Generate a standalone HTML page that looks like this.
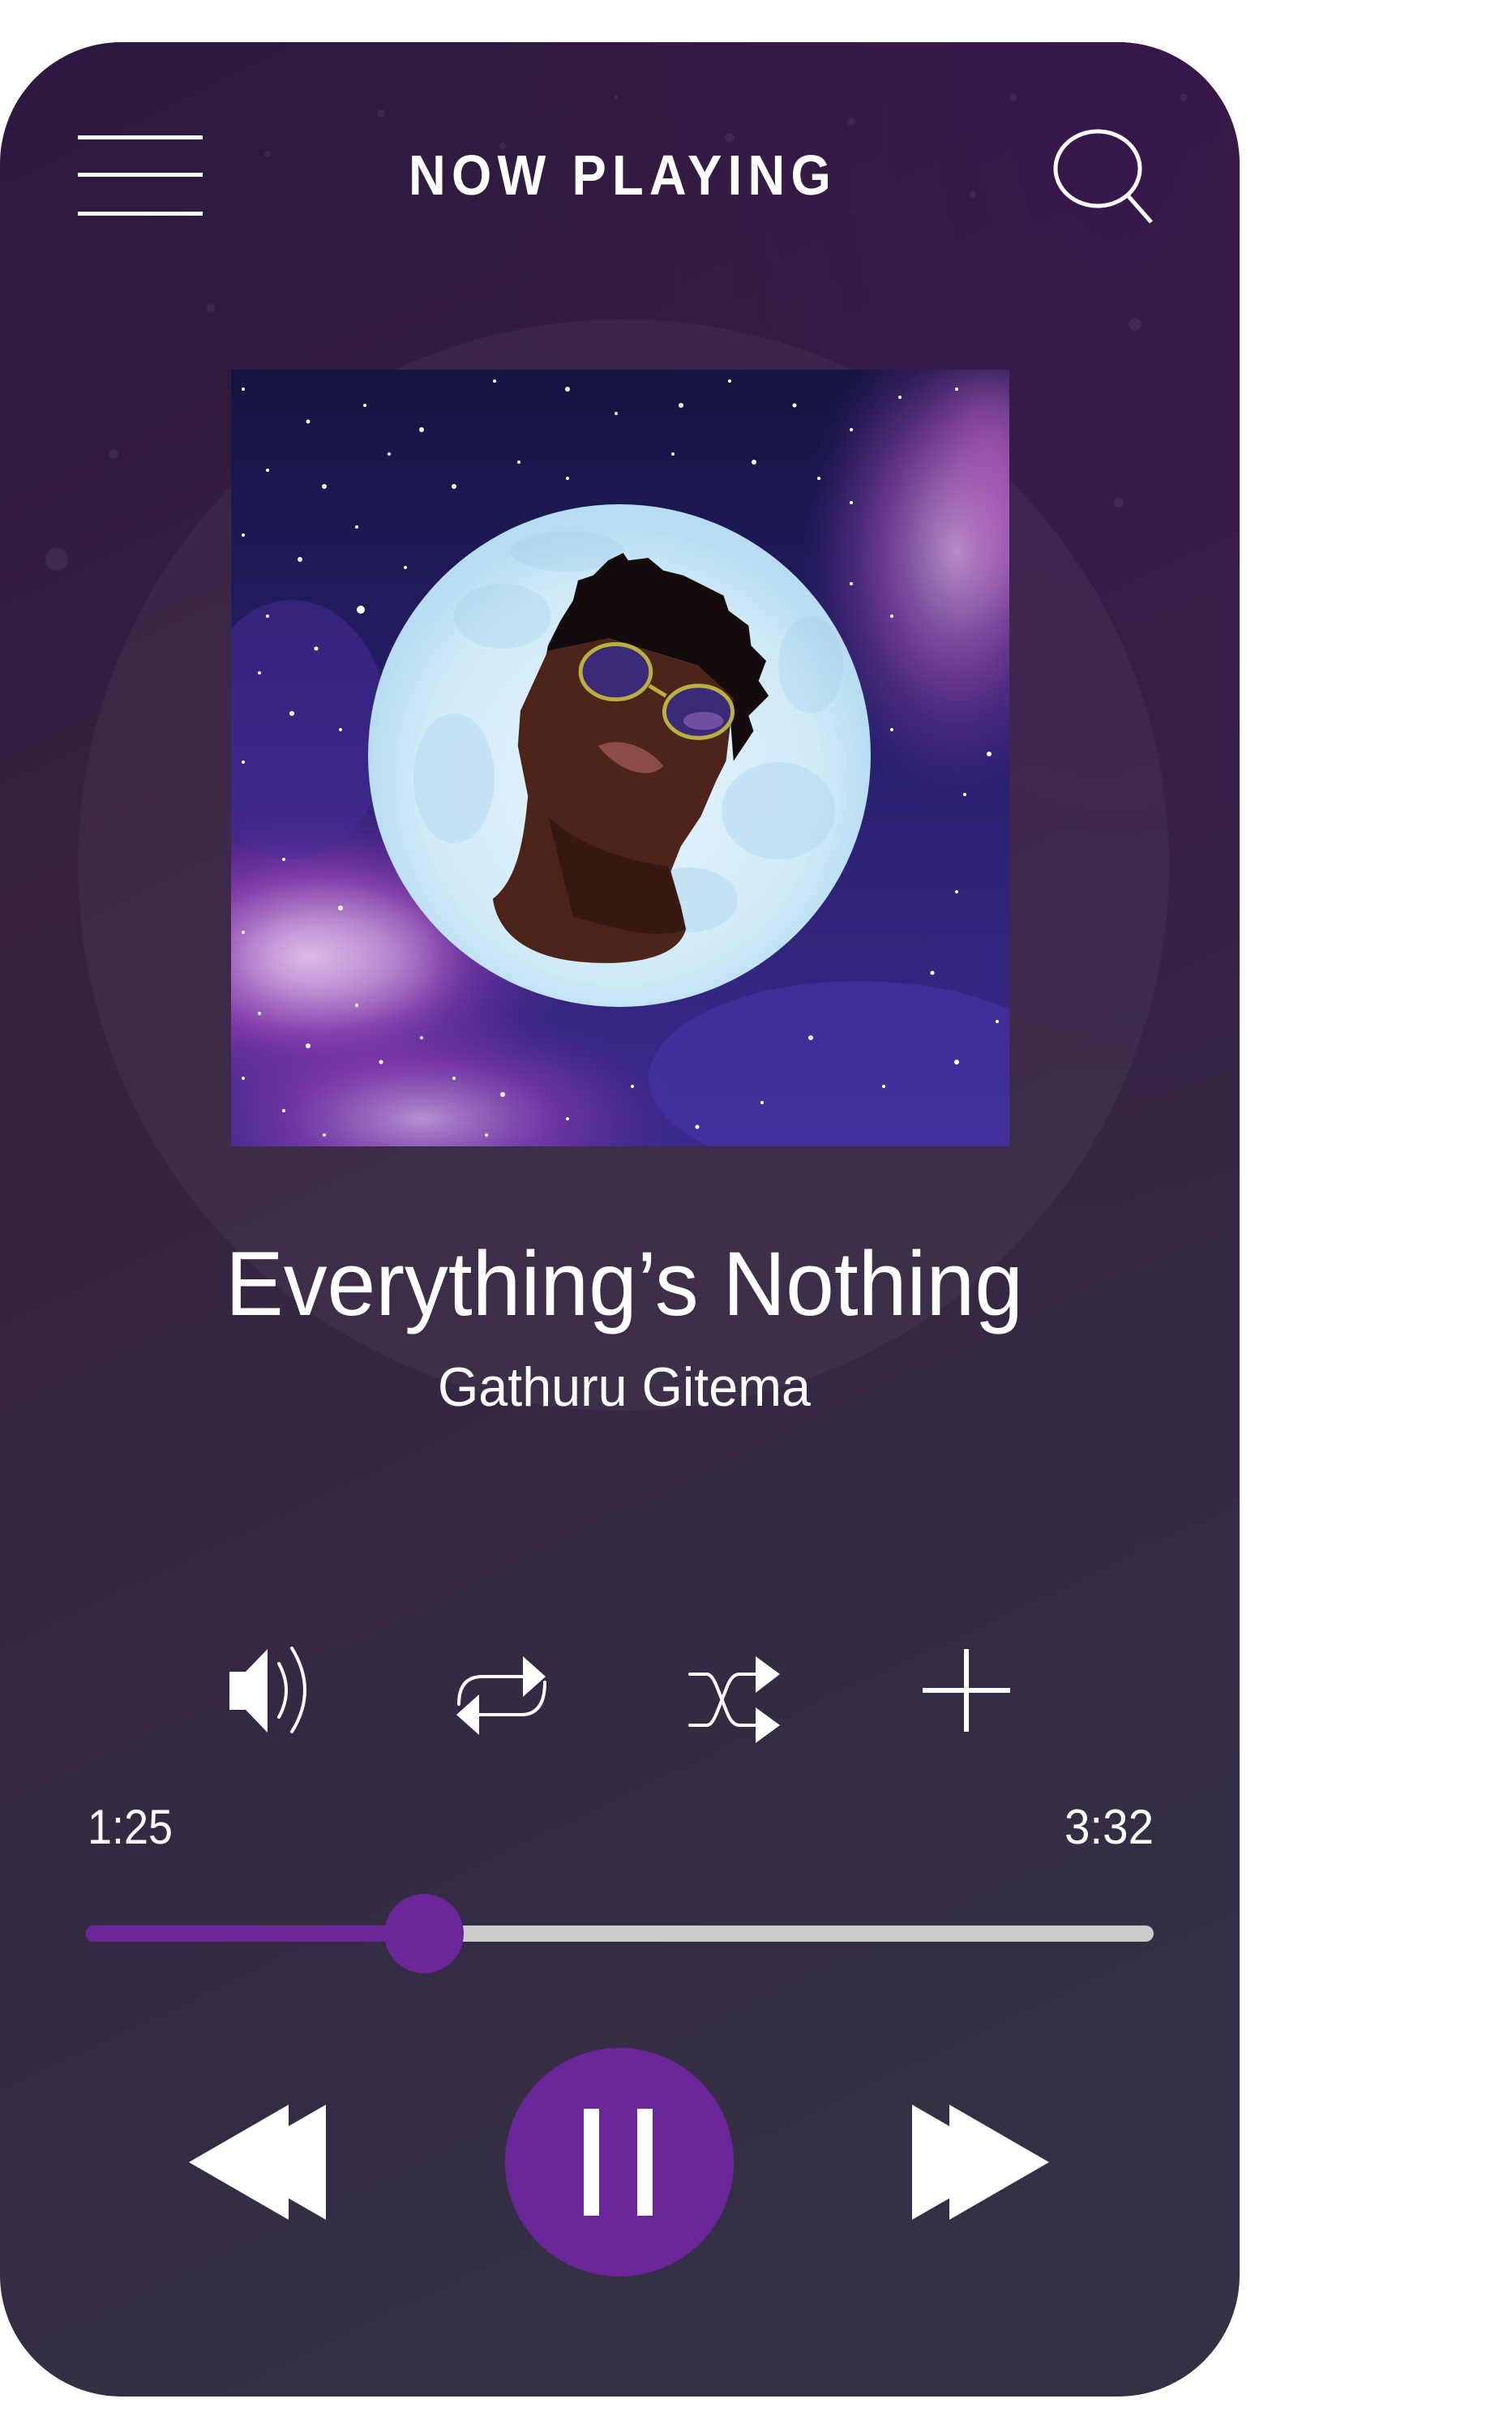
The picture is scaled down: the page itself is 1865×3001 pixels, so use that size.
<!DOCTYPE html>
<html><head><meta charset="utf-8">
<style>
html,body{margin:0;padding:0;background:#fff;}
body{width:1865px;height:3001px;overflow:hidden;}
svg{display:block;}
text{font-family:"Liberation Sans",sans-serif;fill:#fff;}
</style></head>
<body>
<svg width="1865" height="3001" viewBox="0 0 1865 3001" xmlns="http://www.w3.org/2000/svg">
<defs>
<linearGradient id="bg" x1="0" y1="0" x2="0.25" y2="1">
<stop offset="0" stop-color="#2c1740"/>
<stop offset="0.35" stop-color="#35213f"/>
<stop offset="1" stop-color="#342f45"/>
</linearGradient>
<radialGradient id="topglow" cx="0.9" cy="0.02" r="0.5">
<stop offset="0" stop-color="#3a1650" stop-opacity="0.8"/>
<stop offset="1" stop-color="#3a1650" stop-opacity="0"/>
</radialGradient>
<filter id="blur" x="-50%" y="-50%" width="200%" height="200%"><feGaussianBlur stdDeviation="35"/></filter>
<clipPath id="artclip"><rect x="285" y="456" width="960" height="958"/></clipPath>
<linearGradient id="sky" x1="0" y1="0" x2="0" y2="1">
<stop offset="0" stop-color="#14143f"/>
<stop offset="0.5" stop-color="#2a2070"/>
<stop offset="1" stop-color="#3a2a8a"/>
</linearGradient>
<radialGradient id="neb1" cx="0.5" cy="0.5" r="0.5">
<stop offset="0" stop-color="#e0b0e8" stop-opacity="0.95"/>
<stop offset="0.5" stop-color="#9a40b8" stop-opacity="0.7"/>
<stop offset="1" stop-color="#6a2aa0" stop-opacity="0"/>
</radialGradient>
<radialGradient id="neb2" cx="0.5" cy="0.5" r="0.5">
<stop offset="0" stop-color="#c9a8d8" stop-opacity="0.85"/>
<stop offset="0.5" stop-color="#9a4ab0" stop-opacity="0.6"/>
<stop offset="1" stop-color="#5a2a90" stop-opacity="0"/>
</radialGradient>
<radialGradient id="moon" cx="0.5" cy="0.55" r="0.5">
<stop offset="0" stop-color="#e6f5fd"/>
<stop offset="0.8" stop-color="#cfeaf8"/>
<stop offset="1" stop-color="#b8ddf2"/>
</radialGradient>
</defs>

<rect x="0" y="52" width="1529" height="2904" rx="150" ry="150" fill="url(#bg)"/>
<rect x="0" y="52" width="1529" height="2904" rx="150" ry="150" fill="url(#topglow)"/>
<g fill="#ffffff" opacity="0.06">
<circle cx="470" cy="140" r="5"/><circle cx="620" cy="180" r="4"/><circle cx="900" cy="170" r="6"/><circle cx="1050" cy="150" r="5"/><circle cx="1200" cy="240" r="4"/><circle cx="1400" cy="400" r="8"/><circle cx="70" cy="690" r="14"/><circle cx="140" cy="560" r="6"/><circle cx="260" cy="380" r="5"/><circle cx="1250" cy="120" r="4"/><circle cx="1380" cy="620" r="6"/><circle cx="1460" cy="120" r="5"/><circle cx="330" cy="190" r="4"/><circle cx="760" cy="120" r="3"/>
</g>

<circle cx="769" cy="1067" r="673" fill="#ffffff" opacity="0.04"/>

<g fill="#fff">
<rect x="96" y="167" width="154" height="5"/>
<rect x="96" y="213" width="154" height="5"/>
<rect x="96" y="261" width="154" height="5"/>
</g>
<text x="768" y="240" text-anchor="middle" font-size="70" font-weight="bold" textLength="528" lengthAdjust="spacingAndGlyphs" letter-spacing="8">NOW PLAYING</text>
<g fill="none" stroke="#fff" stroke-width="5">
<ellipse cx="1354" cy="208" rx="52" ry="46"/>
<line x1="1390" y1="240" x2="1420" y2="274"/>
</g>

<g clip-path="url(#artclip)">
<rect x="285" y="456" width="960" height="958" fill="url(#sky)"/>
<ellipse cx="380" cy="1180" rx="330" ry="200" fill="url(#neb1)"/>
<ellipse cx="520" cy="1380" rx="320" ry="140" fill="url(#neb1)" opacity="0.8"/>
<ellipse cx="1180" cy="680" rx="190" ry="300" fill="url(#neb2)"/>
<ellipse cx="1060" cy="1330" rx="260" ry="120" fill="#4a36a8" opacity="0.6"/>
<ellipse cx="360" cy="900" rx="120" ry="160" fill="#4a2c9a" opacity="0.5"/>
<ellipse cx="1230" cy="600" rx="60" ry="140" fill="#d070d0" opacity="0.5" filter="url(#blur)"/>
<ellipse cx="420" cy="1180" rx="120" ry="60" fill="#e8d0ee" opacity="0.45" filter="url(#blur)"/>
<g fill="#fff">
<circle cx="300" cy="480" r="2"/><circle cx="380" cy="520" r="2.5"/><circle cx="450" cy="500" r="2"/><circle cx="520" cy="530" r="3"/><circle cx="610" cy="470" r="2"/><circle cx="700" cy="480" r="3"/><circle cx="760" cy="510" r="2"/><circle cx="840" cy="500" r="3"/><circle cx="900" cy="470" r="2"/><circle cx="980" cy="500" r="2.5"/><circle cx="1050" cy="530" r="2"/><circle cx="1110" cy="490" r="2"/><circle cx="1180" cy="480" r="2"/>
<circle cx="330" cy="580" r="2"/><circle cx="400" cy="600" r="3"/><circle cx="480" cy="560" r="2"/><circle cx="560" cy="600" r="3"/><circle cx="640" cy="570" r="2"/><circle cx="700" cy="590" r="2"/><circle cx="830" cy="560" r="2"/><circle cx="930" cy="570" r="3"/><circle cx="1010" cy="590" r="2"/><circle cx="1050" cy="620" r="2"/>
<circle cx="300" cy="660" r="2"/><circle cx="370" cy="690" r="3"/><circle cx="440" cy="650" r="2"/><circle cx="500" cy="700" r="2"/><circle cx="445" cy="752" r="5"/><circle cx="330" cy="760" r="2"/><circle cx="390" cy="800" r="2.5"/><circle cx="320" cy="830" r="2"/><circle cx="360" cy="880" r="3"/><circle cx="300" cy="940" r="2"/><circle cx="420" cy="900" r="2"/>
<circle cx="1050" cy="720" r="2"/><circle cx="1100" cy="760" r="2"/><circle cx="1220" cy="930" r="3"/><circle cx="1190" cy="980" r="2"/><circle cx="1100" cy="900" r="2"/><circle cx="1180" cy="1100" r="2"/><circle cx="1150" cy="1200" r="2.5"/><circle cx="1000" cy="1280" r="3"/><circle cx="1090" cy="1340" r="2"/><circle cx="1180" cy="1310" r="3"/><circle cx="1230" cy="1260" r="2"/>
<circle cx="320" cy="1250" r="2"/><circle cx="380" cy="1290" r="3"/><circle cx="440" cy="1240" r="2"/><circle cx="470" cy="1310" r="2.5"/><circle cx="520" cy="1280" r="2"/><circle cx="560" cy="1330" r="2"/><circle cx="620" cy="1350" r="3"/><circle cx="700" cy="1380" r="2"/><circle cx="780" cy="1340" r="2"/><circle cx="860" cy="1390" r="2.5"/><circle cx="940" cy="1360" r="2"/><circle cx="350" cy="1370" r="2"/><circle cx="300" cy="1330" r="2"/><circle cx="400" cy="1400" r="2"/><circle cx="600" cy="1400" r="2"/><circle cx="350" cy="1060" r="2"/><circle cx="420" cy="1120" r="3"/><circle cx="300" cy="1150" r="2"/>
</g>
<circle cx="764" cy="932" r="310" fill="url(#moon)"/>
<g fill="#a9d2ec" opacity="0.4">
<ellipse cx="620" cy="760" rx="60" ry="40"/><ellipse cx="560" cy="960" rx="50" ry="80"/><ellipse cx="960" cy="1000" rx="70" ry="60"/><ellipse cx="1000" cy="820" rx="40" ry="60"/><ellipse cx="850" cy="1110" rx="60" ry="40"/><ellipse cx="700" cy="680" rx="70" ry="25"/>
</g>
<g transform="translate(280,450) scale(0.6186)">
<path d="M620 670 L640 560 L665 510 L690 470 L700 430 L730 420 L760 390 L790 375 L800 390 L840 385 L870 410 L910 420 L950 440 L990 460 L1000 490 L1040 520 L1045 560 L1075 590 L1060 630 L1080 660 L1040 700 L1050 730 L1010 790 L1000 660 L940 600 L760 545 L690 580 Z" fill="#140c0c"/>
<path d="M585 690 L640 570 L760 545 L940 600 L1010 665 L995 790 L975 830 L945 900 L905 960 L885 1010 L905 1080 L915 1125 C900 1185 800 1200 700 1190 C600 1180 540 1135 530 1065 C580 1025 592 945 600 860 L580 760 Z" fill="#4c2419"/>
<path d="M640 900 C700 960 800 990 880 1000 L905 1080 L915 1125 C860 1150 760 1120 690 1100 Z" fill="#331510" opacity="0.8"/>
<path d="M740 760 C780 740 840 760 870 800 C840 830 780 810 740 760 Z" fill="#8a4c44"/>
<ellipse cx="775" cy="612" rx="70" ry="55" fill="#3a2a78" stroke="#b9b040" stroke-width="8"/>
<ellipse cx="940" cy="692" rx="68" ry="52" fill="#3a2a78" stroke="#b9b040" stroke-width="8"/>
<ellipse cx="950" cy="710" rx="40" ry="18" fill="#8a60b0" opacity="0.7"/>
<line x1="842" y1="640" x2="875" y2="660" stroke="#b9b040" stroke-width="8"/>
</g>
</g>

<text x="770" y="1622" text-anchor="middle" font-size="112" textLength="984" lengthAdjust="spacingAndGlyphs">Everything’s Nothing</text>
<text x="770" y="1734" text-anchor="middle" font-size="68" textLength="460" lengthAdjust="spacingAndGlyphs" fill="#eee">Gathuru Gitema</text>

<g fill="#fff">
<path d="M283 2062 L303 2062 L330 2034 L330 2137 L303 2109 L283 2109 Z"/>
</g>
<g fill="none" stroke="#fff" stroke-width="4" stroke-linecap="round">
<path d="M344 2052 Q362 2085 344 2118"/>
<path d="M360 2033 Q392 2085 360 2136"/>
<path d="M566 2102 Q566 2068 595 2068 L652 2068"/>
<path d="M672 2075 Q672 2115 643 2115 L590 2115"/>
<path d="M851 2065 L872 2065 Q878 2065 884 2080 L897 2113 Q903 2128 912 2128 L935 2128"/>
<path d="M851 2128 L872 2128 Q878 2128 884 2113 L897 2080 Q903 2065 912 2065 L935 2065"/>
</g>
<g fill="#fff">
<path d="M645 2043 L673 2068 L645 2093 Z"/>
<path d="M591 2090 L563 2115 L591 2140 Z"/>
<path d="M932 2043 L962 2065 L932 2088 Z"/>
<path d="M932 2106 L962 2128 L932 2150 Z"/>
<rect x="1138" y="2082" width="108" height="6"/>
<rect x="1189" y="2034" width="6" height="102"/>
</g>

<text x="108" y="2274" font-size="60" textLength="105" lengthAdjust="spacingAndGlyphs">1:25</text>
<text x="1313" y="2274" font-size="60" textLength="110" lengthAdjust="spacingAndGlyphs">3:32</text>

<rect x="106" y="2375" width="1317" height="20" rx="10" fill="#cccccc"/>
<rect x="106" y="2375" width="420" height="20" rx="10" fill="#6b2799"/>
<circle cx="523" cy="2385" r="49" fill="#6b2799"/>

<g fill="#fff">
<path d="M233 2667 L356 2596 L356 2738 Z"/>
<path d="M279 2667 L402 2596 L402 2738 Z"/>
<path d="M1294 2667 L1171 2596 L1171 2738 Z"/>
<path d="M1248 2667 L1125 2596 L1125 2738 Z"/>
</g>
<circle cx="764" cy="2667" r="141" fill="#6b2799"/>
<rect x="720" y="2601" width="19" height="132" fill="#fff"/>
<rect x="786" y="2601" width="19" height="132" fill="#fff"/>
</svg>
</body></html>
